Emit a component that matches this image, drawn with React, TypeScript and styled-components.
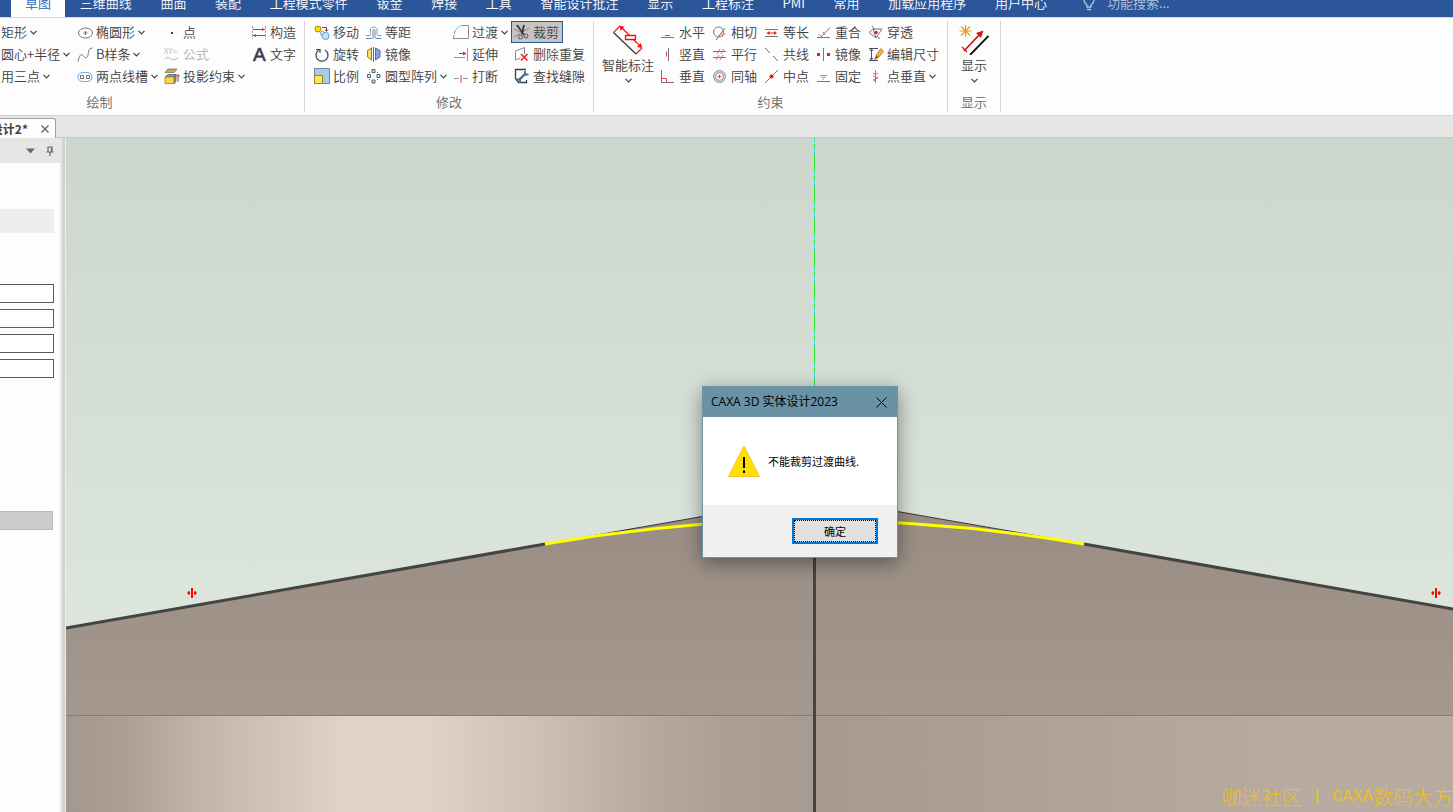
import React from "react";
import styled, { createGlobalStyle, css } from "styled-components";

const GlobalStyle = createGlobalStyle`
  *, *::before, *::after { box-sizing: border-box; }
  body { margin: 0; }
  button, input {
    font: inherit;
    color: inherit;
    margin: 0;
    padding: 0;
    border: 0;
    border-radius: 0;
    background: none;
  }
`;

/* ---------- shell ---------- */

const Shell = styled.div`
  display: flex;
  flex-direction: column;
  height: 100vh;
  overflow: hidden;
  background: #e6e6e6;
  color: #404040;
  font-family: "Noto Sans CJK SC", "Liberation Sans", sans-serif;
  font-size: 13px;
  font-weight: 350;
  line-height: 20px;
`;

/* ---------- tab bar ---------- */

const TabBar = styled.nav`
  display: flex;
  align-items: flex-end;
  height: 17px;
  flex: none;
  padding-left: 11px;
  background: #2b579a;
  overflow: hidden;
`;

const Tabs = styled.div`
  display: flex;
  flex: 0 0 1050px;
  justify-content: space-between;
`;

const Tab = styled.button<{ $active?: boolean }>`
  flex: none;
  height: 28px;
  padding: 0 14px;
  line-height: 28px;
  white-space: nowrap;
  color: ${(p) => (p.$active ? "#1f63b5" : "#ffffff")};
  background: ${(p) => (p.$active ? "#fdfdfd" : "transparent")};
`;

const SearchBox = styled.label`
  display: flex;
  align-items: center;
  gap: 12px;
  height: 28px;
  margin-left: 22px;
  color: #b4c4de;
`;

const SearchInput = styled.input`
  width: 120px;
  height: 28px;
  line-height: 28px;
  outline: none;
  &::placeholder {
    color: #b4c4de;
    opacity: 1;
  }
`;

/* ---------- ribbon ---------- */

const Ribbon = styled.header`
  display: flex;
  flex: none;
  padding: 3px 0;
  background: #fdfdfd;
  border-top: 1px solid #d5dbe6;
  border-bottom: 1px solid #d2d2d2;
`;

const Group = styled.section<{ $pad?: number }>`
  display: flex;
  flex-direction: column;
  gap: 5px;
  border-right: 1px solid #d4d4d4;
  padding-left: ${(p) => p.$pad ?? 0}px;
`;

const Tools = styled.div<{ $columns: string }>`
  display: grid;
  grid-template-columns: ${(p) => p.$columns};
  grid-template-rows: repeat(3, 22px);
  grid-auto-flow: column;
`;

const GroupLabel = styled.div<{ $trail?: number }>`
  text-align: center;
  padding-right: ${(p) => p.$trail ?? 0}px;
  color: #666666;
`;

const Tool = styled.button<{ $selected?: boolean; $flush?: boolean; $disabled?: boolean }>`
  display: flex;
  align-items: center;
  justify-self: start;
  gap: 3px;
  height: 22px;
  padding: 0 ${(p) => (p.$selected ? 3 : 2)}px 0 ${(p) => (p.$flush ? 0 : 2)}px;
  border: 1px solid transparent;
  white-space: nowrap;
  color: ${(p) => (p.$disabled ? "#b0b0b0" : "#404040")};
  ${(p) =>
    p.$selected &&
    css`
      background: #c5c5c5;
      border-color: #2b579a;
    `}
`;

const LargeTool = styled.button<{ $lead?: number }>`
  display: flex;
  flex-direction: column;
  align-items: center;
  grid-row: 1 / 4;
  padding: 4px 0 0 ${(p) => p.$lead ?? 0}px;
  white-space: nowrap;

  svg + svg {
    margin-top: 3px;
  }
`;

const Chevron = () => (
  <svg width="7" height="5" viewBox="0 0 7 5" fill="none" stroke="#404040" strokeWidth="1.2">
    <path d="M.5 .8 3.5 3.8 6.5 .8" />
  </svg>
);

/* ---------- icons ---------- */

const RED = "#e84545";
const GREY = "#777777";
const BLUE = "#5b9bd0";

const icons: Record<string, React.ReactNode> = {
  ellipse: (
    <g stroke={GREY}>
      <ellipse cx="8.500" cy="9" rx="7" ry="5" />
      <path d="M8.500 7v4M6.500 9h4" />
    </g>
  ),
  spline: <path stroke={GREY} d="M1 15.500C2 10 4 7 6 9.500S10 13 11 9 11 2.500 15.500 2" />,
  slot: (
    <g>
      <rect x="1" y="4.500" width="14" height="9" rx="4.500" stroke="#64a8ea" />
      <path stroke={GREY} d="M3.500 7.500h3v3h-3zM9.500 7.500h3v3h-3z" />
    </g>
  ),
  point: <path fill="#404040" d="M7 8h2v2H7z" />,
  formula: (
    <g>
      <text x="0" y="8" fontSize="8" fill="#b5b5b5">XY=</text>
      <path stroke="#b5b5b5" d="M1 13c3-3 4-1 6 0s4 1 7-1" />
    </g>
  ),
  project: (
    <g>
      <path fill="#c2b04a" stroke="#77735f" strokeWidth=".8" d="M4 1h9l-3 3.500H1z" />
      <path fill="#8b98a0" stroke="#59636a" strokeWidth=".8" d="M1 9 4 6.500h8L10 9zM10 9 12 6.500V13l-2 3z" />
      <path fill="#ffd83a" stroke="#9b8430" strokeWidth=".8" d="M1 9h9v6.500H1z" />
      <path stroke="#c23535" d="M14 14V7M12.500 8.500 14 6.500l1.500 2" />
    </g>
  ),
  construct: (
    <g>
      <path stroke="#9aa0c0" strokeDasharray="3 1" d="M1.500 2v13M14.500 2v13" />
      <path stroke="#b03a3a" d="M2 5.500h12M2 11.500h12" />
      <path fill="#b03a3a" d="M11 4 14 5.500 11 7zM5 10 2 11.500 5 13z" />
    </g>
  ),
  letter: (
    <text x="2" y="15" fontSize="19" fontWeight="400" fontFamily="Liberation Sans" fill="#3c3c46" stroke="#3c3c46" strokeWidth=".6">A</text>
  ),
  move: (
    <g>
      <circle cx="4" cy="5" r="3" fill="#ffe000" stroke="#a18b00" />
      <circle cx="8.500" cy="9.500" r="2" stroke={BLUE} />
      <circle cx="11.500" cy="12" r="3.500" fill="#c6e4f8" stroke={BLUE} />
      <path stroke="#b03030" d="M8 3.500h4.500V7M11 5.500 12.500 7.500 14 5.500" />
    </g>
  ),
  rotate: (
    <g stroke="#3f4650" strokeWidth="1.300">
      <path d="M11 4A6 6 0 1 1 5 4" />
      <path d="M2 3.500 6 3.500 6 7" strokeWidth="1.200" />
    </g>
  ),
  scale: (
    <g>
      <path fill="#a7cbe2" stroke="#6f8797" d="M.5 .5h15v15H.5z" />
      <path fill="#ffe94a" stroke="#8d8338" d="M.5 7.500h8v8h-8z" />
    </g>
  ),
  offset: (
    <g>
      <path stroke="#8d98a4" d="M0 11.500h3c2 0 2-1.500 1.500-3C2.500 1.500 12.500 1 11 8.500c-.5 2 0 3 2 3h2.500" />
      <path stroke="#5d88b8" d="M0 14.500h5.500c2 0 2-1 1.500-3V6.500c0-1.500 2-1.500 2 0v5c-.5 2 0 3 2 3h4.500" />
    </g>
  ),
  mirror: (
    <g>
      <path fill="#f5dc6a" stroke="#8b7c36" d="M1.500 4.500 5.500 2v12l-4-3z" />
      <path fill="#7fa6dd" stroke="#4d6ea0" d="M9.500 2l4.500 2.500V11l-4.500 3z" />
      <path stroke="#666" d="M7.500 1v15" />
    </g>
  ),
  pattern: (
    <g stroke="#4f6680" fill="#cfe2f5">
      <path d="M6 1.500h3v3H6z" fill="#ffe000" />
      <path d="M1.500 6.500h3v3h-3zM11 6.500h3v3h-3zM6 12h3v3H6z" />
      <path fill="none" d="M3 5l1-1M11 4l1 1M3 11l1 1M11 12l1-1" />
    </g>
  ),
  fillet: (
    <g>
      <path stroke="#5fa0dc" d="M.5 15C.5 7 5 1.500 10 1.500" strokeDasharray="4 1" />
      <path stroke="#8c8c8c" d="M10 1.500h5.500v13H.5" />
    </g>
  ),
  extend: (
    <g>
      <path stroke="#8c9ab5" d="M1 11.500h11M14.500 2v13" />
      <path stroke="#c23535" d="M6 7.500h7" />
      <path fill="#c23535" d="M10 5.500 13.500 7.500 10 9.500z" />
    </g>
  ),
  split: (
    <g>
      <path stroke="#8c98a5" d="M1 10.500h5M10 10.500h5" />
      <path stroke={RED} d="M8 7v8" />
    </g>
  ),
  trim: (
    <g>
      <path stroke="#9c7b72" d="M0 13 15 4M0 5l6 3" />
      <path stroke="#30363c" strokeWidth="1.800" d="M3 1l7 10M10 1 8 10" />
      <circle cx="6.500" cy="13" r="2" stroke="#50565c" />
      <circle cx="12" cy="12" r="2" stroke="#50565c" />
    </g>
  ),
  dedupe: (
    <g>
      <path stroke="#888" d="M1.500 5 10.500 1.500v7M1.500 5v9l5-2" />
      <path stroke="#f02020" strokeWidth="1.600" d="M7 8l6.500 6.500M13.500 8 7 14.500" />
    </g>
  ),
  gap: (
    <g>
      <path stroke="#32404a" strokeWidth="1.300" d="M12 1.500H1.500v9l3 4h8V12" />
      <path stroke="#3e7199" strokeWidth="2.400" d="M5 12l6-6" />
      <path stroke="#3e7199" strokeWidth="1.800" d="M11 3v3.500h3.500M2.500 11.500H6V15" />
    </g>
  ),
  horizontal: (
    <g>
      <path stroke={GREY} d="M1 13.500h13" />
      <path stroke={RED} d="M5 11.500h5" />
    </g>
  ),
  vertical: (
    <g>
      <path stroke={GREY} d="M8.500 2v13" />
      <path stroke={RED} d="M6.500 5.500v5" />
    </g>
  ),
  perpendicular: (
    <g>
      <path stroke={GREY} d="M1.500 2v12.500H14" />
      <path stroke={RED} d="M2 10.500h4.500v4" />
    </g>
  ),
  tangent: (
    <g>
      <circle cx="6.500" cy="8" r="5" stroke={GREY} />
      <path stroke={GREY} d="M4 16 13 4" />
      <path stroke={RED} strokeWidth=".8" d="M7 12l3-4M10 13l3-4" />
    </g>
  ),
  parallel: (
    <g>
      <path stroke={GREY} d="M1 5.500h13M1 11.500h13" />
      <path stroke={RED} strokeWidth=".8" d="M5 8l3-5M9 8l3-5M4 14l3-5M8 14l3-5" />
    </g>
  ),
  concentric: (
    <g stroke="#8a929c">
      <circle cx="7.500" cy="8.500" r="6" fill="#d4dae0" />
      <circle cx="7.500" cy="8.500" r="4" fill="#fff" />
      <path stroke={RED} d="M7.500 6.500v4M5.500 8.500h4" />
    </g>
  ),
  equal: (
    <g>
      <path stroke={GREY} d="M1 5.500h13M1 12.500h13" />
      <path stroke="#e02020" d="M4 9h7" />
      <path fill="#e02020" d="M5.500 7v4L2.500 9zM10 7v4L13 9z" />
    </g>
  ),
  collinear: <path stroke={GREY} d="M1 2l5 5M9 10l5 5" />,
  midpoint: (
    <g>
      <path stroke={GREY} d="M1 15 14 2" />
      <circle cx="7.500" cy="8.500" r="2" fill="#f01818" />
    </g>
  ),
  coincide: (
    <g>
      <path stroke={GREY} d="M1 13.500h13M5 13 14 3.500" />
      <path stroke={RED} strokeWidth=".8" d="M3 10.500 6 13M7 8l2 3" />
    </g>
  ),
  symmetric: (
    <g>
      <path stroke={GREY} d="M7.500 2v13" />
      <path fill="#f01818" d="M1 7h3v3H1zM11 7h3v3h-3z" />
    </g>
  ),
  fix: (
    <g>
      <path stroke={GREY} d="M1 13.500h13" />
      <path stroke={RED} strokeWidth=".8" d="M4 7.500h7M5.500 9.500h4M7 11.500h1" />
    </g>
  ),
  pierce: (
    <g>
      <path stroke={GREY} d="M1 8.500 5 5h9l-6 9zM4 2l3 4M9 12l3 3M5 5l3 9" />
      <circle cx="8" cy="8.500" r="1.800" fill="#e02020" />
    </g>
  ),
  editdim: (
    <g>
      <path stroke="#4a5663" d="M1 2.500h9M1 14.500h9M3.500 3v11M2 5l1.500-2L5 5M2 12l1.500 2L5 12" />
      <path fill="#f2b233" stroke="#a8752c" strokeWidth=".8" d="M13 2.500l2.500 3-5 6L8 9z" />
      <path fill="#9b5a32" d="M8 9l2.500 2.500L6 14.500z" />
    </g>
  ),
  pointperp: (
    <g stroke={RED} strokeWidth=".8">
      <path d="M7.500 2v13" />
      <path d="M5 5l2.500 1.500L10 5M5 8l5 2-5 2 2.500 1" />
    </g>
  ),
};

const Icon = ({ name }: { name: string }) => (
  <svg width="16" height="16" viewBox="0 0 16 16" fill="none" aria-hidden="true">
    {icons[name]}
  </svg>
);

interface ToolDef {
  icon?: string;
  label: string;
  menu?: boolean;
  selected?: boolean;
  disabled?: boolean;
}

const drawTools: ToolDef[] = [
  { label: "矩形", menu: true },
  { label: "圆心+半径", menu: true },
  { label: "用三点", menu: true },
  { icon: "ellipse", label: "椭圆形", menu: true },
  { icon: "spline", label: "B样条", menu: true },
  { icon: "slot", label: "两点线槽", menu: true },
  { icon: "point", label: "点" },
  { icon: "formula", label: "公式", disabled: true },
  { icon: "project", label: "投影约束", menu: true },
  { icon: "construct", label: "构造" },
  { icon: "letter", label: "文字" },
];

const modifyTools: ToolDef[] = [
  { icon: "move", label: "移动" },
  { icon: "rotate", label: "旋转" },
  { icon: "scale", label: "比例" },
  { icon: "offset", label: "等距" },
  { icon: "mirror", label: "镜像" },
  { icon: "pattern", label: "圆型阵列", menu: true },
  { icon: "fillet", label: "过渡", menu: true },
  { icon: "extend", label: "延伸" },
  { icon: "split", label: "打断" },
  { icon: "trim", label: "裁剪", selected: true },
  { icon: "dedupe", label: "删除重复" },
  { icon: "gap", label: "查找缝隙" },
];

const constraintTools: ToolDef[] = [
  { icon: "horizontal", label: "水平" },
  { icon: "vertical", label: "竖直" },
  { icon: "perpendicular", label: "垂直" },
  { icon: "tangent", label: "相切" },
  { icon: "parallel", label: "平行" },
  { icon: "concentric", label: "同轴" },
  { icon: "equal", label: "等长" },
  { icon: "collinear", label: "共线" },
  { icon: "midpoint", label: "中点" },
  { icon: "coincide", label: "重合" },
  { icon: "symmetric", label: "镜像" },
  { icon: "fix", label: "固定" },
  { icon: "pierce", label: "穿透" },
  { icon: "editdim", label: "编辑尺寸" },
  { icon: "pointperp", label: "点垂直", menu: true },
];

const ToolList = ({ items }: { items: ToolDef[] }) => (
  <>
    {items.map((t) => (
      <Tool key={t.label} $flush={!t.icon} $selected={t.selected} $disabled={t.disabled}>
        {t.icon && <Icon name={t.icon} />}
        {t.label}
        {t.menu && <Chevron />}
      </Tool>
    ))}
  </>
);

/* ---------- document tabs ---------- */

const DocumentBar = styled.div`
  display: flex;
  flex: none;
  align-items: flex-end;
  height: 22px;
  background: #e6e6e6;
  border-bottom: 1px solid #c6c6c6;
`;

const DocumentTab = styled.div`
  display: flex;
  align-items: center;
  justify-content: flex-end;
  gap: 13px;
  width: 56px;
  height: 20px;
  margin-bottom: -1px;
  padding-right: 6px;
  background: #fdfdfd;
  border: 1px solid #a0a0a0;
  border-width: 1px 1px 0 0;
  border-radius: 0 3px 0 0;
  font-size: 12px;
  font-weight: 700;
  line-height: 18px;
  white-space: nowrap;
`;

const IconButton = styled.button`
  display: flex;
  align-items: center;
  justify-content: center;
`;

/* ---------- workspace ---------- */

const Workspace = styled.main`
  display: flex;
  flex: 1;
  min-height: 0;
`;

const SidePanel = styled.aside`
  display: flex;
  flex-direction: column;
  width: 60px;
  flex: none;
  background: #fdfdfd;
`;

const PanelHeader = styled.div`
  display: flex;
  align-items: center;
  justify-content: flex-end;
  gap: 11px;
  height: 25px;
  padding-right: 6px;
  background: #e6e6e6;
`;

const PanelSection = styled.div`
  height: 24px;
  margin: 46px 6px 0 0;
  background: #eeeeee;
`;

const Fields = styled.div`
  display: flex;
  flex-direction: column;
  gap: 6px;
  margin: 51px 6px 0 0;
`;

const Field = styled.input`
  width: 100%;
  height: 19px;
  border: 1px solid #5a5a5a;
  border-left: 0;
  background: #ffffff;
`;

const PanelButton = styled.button`
  height: 19px;
  margin: 133px 7px 0 0;
  background: #cccccc;
  border: 1px solid #bababa;
  border-left: 0;
`;

const Splitter = styled.div`
  width: 6px;
  flex: none;
  background: #d3d3d3;
  border-left: 2px solid #e8e8e8;
  border-right: 1px solid #ececec;
`;

const Viewport = styled.div`
  position: relative;
  flex: 1;
  min-width: 0;
  overflow: hidden;
`;

const Scene = styled.svg`
  display: block;
  width: 100%;
  height: 100%;
`;

const Watermark = styled.div`
  position: absolute;
  right: 0;
  bottom: 2px;
  color: #eec021;
  font-size: 20px;
  font-weight: 300;
  line-height: 26px;
  white-space: pre;
  display: flex;
`;

const WatermarkLatin = styled.span`
  font-family: "Liberation Mono", monospace;
  font-size: 17px;
`;

const Model = () => (
  <Scene viewBox="0 0 1387 674" preserveAspectRatio="xMidYMid slice">
    <defs>
      <linearGradient id="sky" x1="0" y1="0" x2="0" y2="1">
        <stop offset="0" stopColor="#ccd6cd" />
        <stop offset="1" stopColor="#dfe9e0" />
      </linearGradient>
      <linearGradient id="roof" gradientUnits="userSpaceOnUse" x1="0" y1="370" x2="0" y2="577">
        <stop offset="0" stopColor="#998d83" />
        <stop offset="1" stopColor="#a5988e" />
      </linearGradient>
      <linearGradient id="wall" gradientUnits="userSpaceOnUse" x1="0" y1="0" x2="1387" y2="0">
        <stop offset="0" stopColor="#a4988e" />
        <stop offset=".04" stopColor="#ab9f95" />
        <stop offset=".1" stopColor="#c2b5ab" />
        <stop offset=".15" stopColor="#d1c4ba" />
        <stop offset=".2" stopColor="#dfd3c9" />
        <stop offset=".26" stopColor="#dfd2c8" />
        <stop offset=".34" stopColor="#cdc0b5" />
        <stop offset=".42" stopColor="#b6a99f" />
        <stop offset=".48" stopColor="#ab9e94" />
        <stop offset=".55" stopColor="#a79b91" />
        <stop offset=".6" stopColor="#a99d92" />
        <stop offset=".75" stopColor="#b1a499" />
        <stop offset=".9" stopColor="#b8ab9f" />
        <stop offset="1" stopColor="#b7aa9e" />
      </linearGradient>
    </defs>
    <rect width="1387" height="577" fill="url(#sky)" />
    <path d="M0 490 748 359 1387 471V577H0z" fill="url(#roof)" />
    <rect y="577" width="1387" height="97" fill="url(#wall)" />
    <path d="M0 577.500H1387" stroke="#857970" />
    <path d="M479 406 748 359 1018 406" fill="none" stroke="#33332f" />
    <path d="M0 490 479 406M1018 406 1387 471" stroke="#444441" strokeWidth="3" />
    <path d="M748.500 359V674" stroke="#444444" strokeWidth="3" />
    <path d="M479 406Q748 359 1018 406" fill="none" stroke="#ffff00" strokeWidth="3" />
    <path d="M748.500 0V359" stroke="#2ae62a" />
    <path d="M748.500 1V359" stroke="#52dcf5" strokeDasharray="5 4 5 18" />
    {[126, 1370].map((x) => (
      <g key={x} transform={`translate(${x} 455)`} fill="#ff0000">
        <path d="M-1-5h2V5h-2zM-5 0l2-2v4zM5 0l-2-2v4z" />
        <path d="M-4-1.500h2v3h-2zM2-1.500h2v3H2z" />
      </g>
    ))}
  </Scene>
);

/* ---------- message box ---------- */

const Dialog = styled.div`
  position: absolute;
  left: 636px;
  top: 248px;
  width: 196px;
  border: 1px solid #6a94a7;
  background: #ffffff;
  color: #000000;
  font-weight: 400;
  box-shadow: 0 5px 18px rgba(0, 0, 0, 0.42);
`;

const DialogTitle = styled.div`
  display: flex;
  align-items: center;
  justify-content: space-between;
  height: 30px;
  padding: 0 10px 0 8px;
  background: #6a92a5;
  font-family: "Open Sans", "Noto Sans CJK SC", sans-serif;
  font-size: 12px;
  white-space: nowrap;
`;

const DialogBody = styled.div`
  display: flex;
  align-items: center;
  gap: 8px;
  height: 88px;
  padding-left: 25px;
  font-size: 11px;
  white-space: nowrap;
`;

const DialogFooter = styled.div`
  display: flex;
  align-items: center;
  justify-content: flex-end;
  height: 52px;
  padding-right: 19px;
  background: #f0f0f0;
`;

const ConfirmButton = styled.button`
  width: 86px;
  height: 26px;
  border: 2px solid #0078d7;
  background: #e1e1e1;
  outline: 1px dotted #000000;
  outline-offset: -3px;
  font-size: 11px;
  line-height: 20px;
`;

const tabs = [
  "草图", "三维曲线", "曲面", "装配", "工程模式零件", "钣金", "焊接", "工具",
  "智能设计批注", "显示", "工程标注", "PMI", "常用", "加载应用程序", "用户中心",
];

export default function App() {
  return (
    <Shell>
      <GlobalStyle />
      <TabBar>
        <Tabs>
          {tabs.map((t, i) => (
            <Tab key={t} $active={i === 0}>{t}</Tab>
          ))}
        </Tabs>
        <SearchBox>
          <svg width="12" height="16" viewBox="0 0 12 16" fill="none" stroke="#b4c4de" strokeWidth="1.300">
            <path d="M4 12V10C2 8.500 1 7 1 5a5 5 0 0 1 10 0c0 2-1 3.500-3 5v2zM4 14.500h4" />
          </svg>
          <SearchInput type="text" placeholder="功能搜索..." aria-label="功能搜索" />
        </SearchBox>
      </TabBar>

      <Ribbon>
        <Group>
          <Tools $columns="74px 87px 87px 56px">
            <ToolList items={drawTools} />
          </Tools>
          <GroupLabel $trail={105}>绘制</GroupLabel>
        </Group>
        <Group $pad={6}>
          <Tools $columns="52px 87px 61px 82px">
            <ToolList items={modifyTools} />
          </Tools>
          <GroupLabel $trail={6}>修改</GroupLabel>
        </Group>
        <Group>
          <Tools $columns="63px 52px 52px 52px 52px 82px">
            <LargeTool $lead={5}>
              <svg width="30" height="30" viewBox="0 0 30 30" fill="none">
                <path stroke="#3c4248" strokeWidth="1.500" d="M1 8 23 29" />
                <path stroke="#f01010" strokeWidth="1.200" d="M0 8 7 1M23 29l6-6M8 2l20 20" />
                <path fill="#f01010" d="M6.500 .8l5 1-4 4zM29 23l-1-5-4 4z" />
                <path fill="#fff" stroke="#f01010" strokeWidth="1.300" d="M12.500 10.500h10v4h-10z" />
              </svg>
              智能标注
              <Chevron />
            </LargeTool>
            <ToolList items={constraintTools} />
          </Tools>
          <GroupLabel>约束</GroupLabel>
        </Group>
        <Group>
          <Tools $columns="52px">
            <LargeTool>
              <svg width="30" height="30" viewBox="0 0 30 30" fill="none">
                <path stroke="#dca21c" strokeWidth="1.200" d="M6.500 0v12M.5 6h12M2 1.500l9 9M11 1.500l-9 9" />
                <path stroke="#d01616" strokeWidth="1.800" d="M5 26 22 8" />
                <path stroke="#d01616" strokeWidth="1.300" d="M3 22l5 5" />
                <path fill="#d01616" d="M24.500 5.500 17 8l5 5z" />
                <path stroke="#111" strokeWidth="1.800" d="M11 30 29.500 11" />
              </svg>
              显示
              <Chevron />
            </LargeTool>
          </Tools>
          <GroupLabel>显示</GroupLabel>
        </Group>
      </Ribbon>

      <DocumentBar>
        <DocumentTab>
          设计2*
          <IconButton aria-label="关闭">
            <svg width="8" height="8" viewBox="0 0 8 8" stroke="#707070" strokeWidth="1.500">
              <path d="M.5 .5l7 7M7.500 .5l-7 7" />
            </svg>
          </IconButton>
        </DocumentTab>
      </DocumentBar>

      <Workspace>
        <SidePanel>
          <PanelHeader>
            <IconButton aria-label="菜单">
              <svg width="9" height="6" viewBox="0 0 9 6"><path fill="#6a6a6a" d="M0 .5h9L4.500 5.500z" /></svg>
            </IconButton>
            <IconButton aria-label="固定面板">
              <svg width="8" height="10" viewBox="0 0 8 10" fill="none" stroke="#6a6a6a" strokeWidth="1.200">
                <path d="M2 6V1h4v5M5.500 1v5M.5 6h7M4 6v4" />
              </svg>
            </IconButton>
          </PanelHeader>
          <PanelSection />
          <Fields>
            {[1, 2, 3, 4].map((n) => (
              <Field key={n} type="text" aria-label={`参数 ${n}`} />
            ))}
          </Fields>
          <PanelButton aria-label="应用" />
        </SidePanel>
        <Splitter />
        <Viewport>
          <Model />
          <Watermark>
            咖迷社区
            <WatermarkLatin> | CAXA</WatermarkLatin>
            数码大方
          </Watermark>
          <Dialog role="dialog" aria-label="CAXA 3D 实体设计2023">
            <DialogTitle>
              CAXA 3D 实体设计2023
              <IconButton aria-label="关闭">
                <svg width="11" height="11" viewBox="0 0 11 11" stroke="#000" strokeWidth="1">
                  <path d="M.5 .5l10 10M10.500 .5l-10 10" />
                </svg>
              </IconButton>
            </DialogTitle>
            <DialogBody>
              <svg width="32" height="32" viewBox="0 0 32 32">
                <path d="M16 1 31.500 31.500H.5z" fill="#ffe100" stroke="#fbc02d" />
                <path d="M15 12h2v11h-2zM15 25.500h2v2.500h-2z" fill="#000" />
              </svg>
              不能裁剪过渡曲线.
            </DialogBody>
            <DialogFooter>
              <ConfirmButton>确定</ConfirmButton>
            </DialogFooter>
          </Dialog>
        </Viewport>
      </Workspace>
    </Shell>
  );
}
